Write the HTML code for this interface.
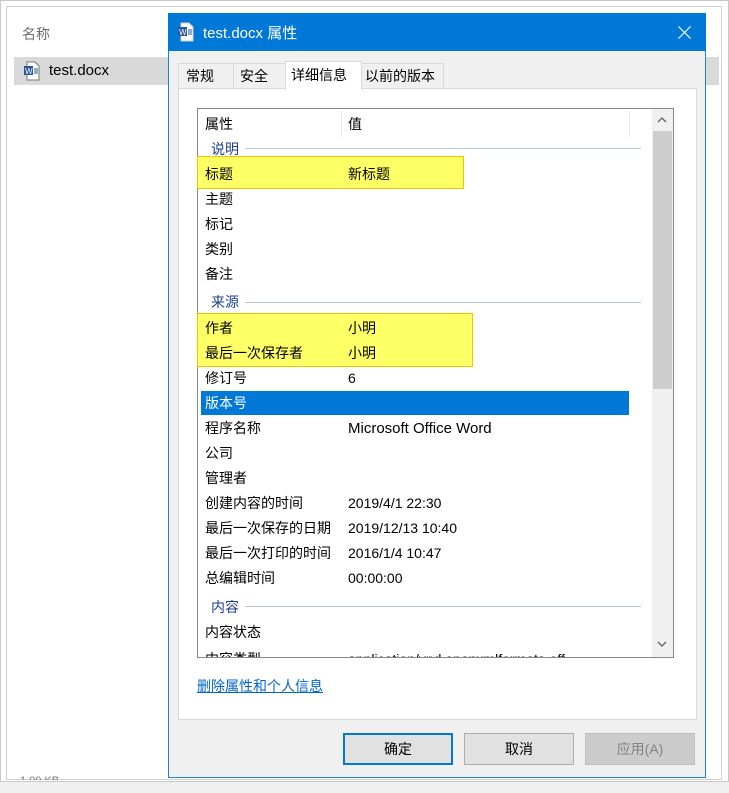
<!DOCTYPE html>
<html><head><meta charset="utf-8"><style>
*{margin:0;padding:0;box-sizing:border-box}
body{width:729px;height:793px;background:#f0f0f0;font-family:"Liberation Sans","Noto Sans CJK SC",sans-serif;font-size:14px;color:#000;position:relative;overflow:hidden}
.a{position:absolute;white-space:nowrap}
.r{position:absolute;height:25px;line-height:25px;margin-top:1px}
.g{color:#1e3f8f}
.line{position:absolute;height:1px;background:#b9c6d8}
.hl{position:absolute;background:#ffff66;border:1px solid #f5c400}
.btn{position:absolute;top:733px;width:110px;height:32px;border:1px solid #adadad;background:#e1e1e1;text-align:center;line-height:30px}
</style></head><body>
<div class="a" style="left:0;top:0;width:729px;height:782px;border:1px solid #c8c8c8;background:#fff"></div>
<div class="a" style="left:6px;top:6px;width:716px;height:774px;border:1px solid #d0d0d0;background:#fff"></div>
<div class="a" style="left:22px;top:24px;color:#6d6d6d">名称</div>
<div class="a" style="left:14px;top:57px;width:705px;height:28px;background:#d9d9d9"></div>
<svg class="a" style="left:23px;top:61px" width="18" height="20" viewBox="0 0 18 20"><path d="M4 1h8l4 4v14H4z" fill="#fff" stroke="#777"/><rect x="1" y="5" width="9" height="9" fill="#2b579a"/><text x="2" y="13" font-size="8" fill="#fff" font-family="Liberation Sans">W</text><path d="M11 8h4M11 10h4M11 12h4" stroke="#2b579a"/></svg>
<div class="a" style="left:49px;top:62px;font-size:15px">test.docx</div>
<div class="a" style="left:168px;top:13px;width:538px;height:765px;background:#f0f0f0;border:1px solid #1883d7"></div>
<div class="a" style="left:168px;top:13px;width:538px;height:38px;background:#0078d7"></div>
<svg class="a" style="left:177px;top:22px" width="18" height="20" viewBox="0 0 18 20"><path d="M4 1h8l4 4v14H4z" fill="#fff" stroke="#ccc"/><rect x="1" y="5" width="9" height="9" fill="#2b579a"/><text x="2" y="13" font-size="8" fill="#fff" font-family="Liberation Sans">W</text><path d="M11 8h4M11 10h4M11 12h4" stroke="#2b579a"/></svg>
<div class="a" style="left:203px;top:22px;color:#fff;font-size:15px">test.docx 属性</div>
<svg class="a" style="left:678px;top:26px" width="13" height="13" viewBox="0 0 13 13"><path d="M0.5 0.5L12.5 12.5M12.5 0.5L0.5 12.5" stroke="#fff" stroke-width="1.2"/></svg>
<div class="a" style="left:178px;top:63px;width:56px;height:26px;border:1px solid #d9d9d9;background:#f0f0f0;line-height:24px;padding-left:7px">常规</div>
<div class="a" style="left:233px;top:63px;width:53px;height:26px;border:1px solid #d9d9d9;background:#f0f0f0;line-height:24px;padding-left:6px">安全</div>
<div class="a" style="left:361px;top:63px;width:83px;height:26px;border:1px solid #d9d9d9;background:#f0f0f0;line-height:24px;padding-left:3px">以前的版本</div>
<div class="a" style="left:178px;top:88px;width:519px;height:632px;background:#fff;border:1px solid #d9d9d9"></div>
<div class="a" style="left:285px;top:61px;width:77px;height:29px;border:1px solid #d9d9d9;border-bottom:none;background:#fff;line-height:26px;padding-left:5px">详细信息</div>
<div class="a" style="left:197px;top:108px;width:477px;height:550px;border:1px solid #828790;background:#fff;overflow:hidden">
<div class="a" style="left:454px;top:0;width:22px;height:550px;background:#f0f0f0"></div>
<div class="a" style="left:455px;top:22px;width:19px;height:258px;background:#cdcdcd"></div>
<svg class="a" style="left:459px;top:8px" width="10" height="6" viewBox="0 0 10 6"><path d="M1 5L5 1L9 5" stroke="#606060" fill="none" stroke-width="1.3"/></svg>
<svg class="a" style="left:459px;top:532px" width="10" height="6" viewBox="0 0 10 6"><path d="M1 1L5 5L9 1" stroke="#606060" fill="none" stroke-width="1.3"/></svg>
<div class="a" style="left:143px;top:2px;width:1px;height:26px;background:#e5e5e5"></div>
<div class="a" style="left:431px;top:2px;width:1px;height:26px;background:#e5e5e5"></div>
</div>
<div class="hl" style="left:197px;top:156px;width:267px;height:33px"></div>
<div class="hl" style="left:197px;top:313px;width:276px;height:54px"></div>
<div class="a" style="left:201px;top:391px;width:428px;height:24px;background:#0078d7"></div>
<div class="r" style="left:205px;top:111px">属性</div><div class="r" style="left:348px;top:111px">值</div>
<div class="r g" style="left:211px;top:136px">说明</div><div class="line" style="left:245px;top:148px;width:396px"></div>
<div class="r" style="left:205px;top:161px">标题</div><div class="r" style="left:348px;top:161px">新标题</div>
<div class="r" style="left:205px;top:186px">主题</div>
<div class="r" style="left:205px;top:211px">标记</div>
<div class="r" style="left:205px;top:236px">类别</div>
<div class="r" style="left:205px;top:261px">备注</div>
<div class="r g" style="left:211px;top:289px">来源</div><div class="line" style="left:245px;top:302px;width:396px"></div>
<div class="r" style="left:205px;top:315px">作者</div><div class="r" style="left:348px;top:315px">小明</div>
<div class="r" style="left:205px;top:340px">最后一次保存者</div><div class="r" style="left:348px;top:340px">小明</div>
<div class="r" style="left:205px;top:365px">修订号</div><div class="r" style="left:348px;top:365px">6</div>
<div class="r" style="left:205px;top:390px;color:#fff">版本号</div>
<div class="r" style="left:205px;top:415px">程序名称</div><div class="r" style="left:348px;top:415px;font-size:15px">Microsoft Office Word</div>
<div class="r" style="left:205px;top:440px">公司</div>
<div class="r" style="left:205px;top:465px">管理者</div>
<div class="r" style="left:205px;top:490px">创建内容的时间</div><div class="r" style="left:348px;top:490px">2019/4/1 22:30</div>
<div class="r" style="left:205px;top:515px">最后一次保存的日期</div><div class="r" style="left:348px;top:515px">2019/12/13 10:40</div>
<div class="r" style="left:205px;top:540px">最后一次打印的时间</div><div class="r" style="left:348px;top:540px">2016/1/4 10:47</div>
<div class="r" style="left:205px;top:565px">总编辑时间</div><div class="r" style="left:348px;top:565px">00:00:00</div>
<div class="r g" style="left:211px;top:594px">内容</div><div class="line" style="left:245px;top:606px;width:396px"></div>
<div class="r" style="left:205px;top:619px">内容状态</div>
<div class="a" style="left:198px;top:646px;width:454px;height:11px;overflow:hidden"><div class="a" style="left:7px;top:1px;line-height:25px">内容类型</div><div class="a" style="left:150px;top:1px;line-height:25px">application/vnd.openxmlformats-off</div></div>
<div class="a" style="left:197px;top:676px;color:#0066cc;text-decoration:underline">删除属性和个人信息</div>
<div class="btn" style="left:343px;border:2px solid #0078d7;line-height:28px">确定</div>
<div class="btn" style="left:464px">取消</div>
<div class="btn" style="left:585px;background:#cccccc;border-color:#bfbfbf;color:#838383">应用(A)</div>
<div class="a" style="left:20px;top:775px;font-size:11px;color:#777;height:5px;overflow:hidden">1.00 KB</div>
</body></html>
